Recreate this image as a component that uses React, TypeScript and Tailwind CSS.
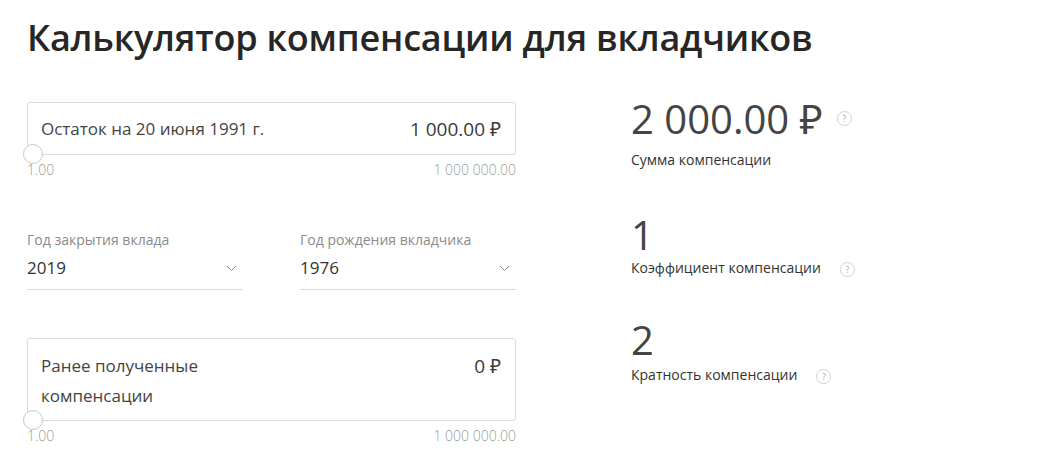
import React from "react";

// Поле суммы со слайдером
const AmountField: React.FC<{ label: React.ReactNode; value: string; tall?: boolean }> = ({
  label,
  value,
  tall,
}) => (
  <div className="w-[489px]">
    <div
      className={`relative flex justify-between border border-[#d9d9d9] rounded-[3px] px-[13px] ${
        tall ? "h-[83px] pt-[12px]" : "h-[53px] items-center"
      }`}
    >
      <div className="text-[17px] leading-[30px] text-[#444]">{label}</div>
      <div className="text-[19px] leading-[30px] text-[#3a3a3a] pr-[1px]">{value}</div>
      {/* Ползунок */}
      <div className="absolute left-[-5px] bottom-[-10px] w-[20px] h-[20px] rounded-full bg-white border border-[#c8c8c8]" />
    </div>
    <div className="flex justify-between text-[14px] font-light leading-[18px] text-[#9a9a9a] mt-[6px]">
      <span>1.00</span>
      <span>1 000 000.00</span>
    </div>
  </div>
);

const SelectField: React.FC<{ label: string; value: string }> = ({ label, value }) => (
  <div className="w-[216px]">
    <div className="text-[14px] leading-[18px] text-[#8a8a8a]">{label}</div>
    <div className="flex items-center justify-between border-b border-[#dcdcdc] mt-[7px] pb-[9px]">
      <span className="text-[17px] leading-[24px] text-[#333]">{value}</span>
      <svg width="11" height="7" viewBox="0 0 11 7" className="mr-[6px]">
        <path d="M1 1 L5.5 5.5 L10 1" fill="none" stroke="#8a8a8a" strokeWidth="1" />
      </svg>
    </div>
  </div>
);

const Help: React.FC = () => (
  <span className="inline-flex items-center justify-center w-[15px] h-[15px] rounded-full border border-[#d2d2d2] text-[9px] text-[#aaa] leading-none">
    ?
  </span>
);

const Result: React.FC<{ value: string; label: string; gap: string; labelTop: string }> = ({
  value,
  label,
  gap,
  labelTop,
}) => (
  <div>
    <div className="text-[40px] leading-[48px] text-[#444]">{value}</div>
    <div className={`flex items-center text-[14px] leading-[20px] text-[#333] ${labelTop}`}>
      <span>{label}</span>
      <span className={gap}>
        <Help />
      </span>
    </div>
  </div>
);

export default function App() {
  return (
    <div
      className="w-[1048px] h-[474px] bg-white pl-[27px] pt-[14px]"
      style={{ fontFamily: '"Open Sans", "Noto Sans", sans-serif' }}
    >
      <h1 className="text-[36px] leading-[48px] font-semibold text-[#262626] tracking-[-0.2px]">
        Калькулятор компенсации для вкладчиков
      </h1>
      <div className="flex mt-[40px]">
        <div className="w-[489px]">
          <AmountField label="Остаток на 20 июня 1991 г." value="1 000.00 ₽" />
          <div className="flex justify-between mt-[52px]">
            <SelectField label="Год закрытия вклада" value="2019" />
            <SelectField label="Год рождения вкладчика" value="1976" />
          </div>
          <div className="mt-[48px]">
            <AmountField
              tall
              label={
                <>
                  Ранее полученные
                  <br />
                  компенсации
                </>
              }
              value="0 ₽"
            />
          </div>
        </div>
        <div className="ml-[115px] flex flex-col">
          <div className="mt-[-7px]">
            <div className="flex items-center">
              <span className="text-[40px] leading-[48px] text-[#444]">2 000.00 ₽</span>
              <span className="ml-[14px] mt-[-6px]">
                <Help />
              </span>
            </div>
            <div className="text-[14px] leading-[20px] text-[#333] mt-[7px]">Сумма компенсации</div>
          </div>
          <div className="mt-[41px]">
            <Result value="1" label="Коэффициент компенсации" gap="ml-[19px]" labelTop="mt-[-1px]" />
          </div>
          <div className="mt-[38px]">
            <Result value="2" label="Кратность компенсации" gap="ml-[19px]" labelTop="mt-[1px]" />
          </div>
        </div>
      </div>
    </div>
  );
}
